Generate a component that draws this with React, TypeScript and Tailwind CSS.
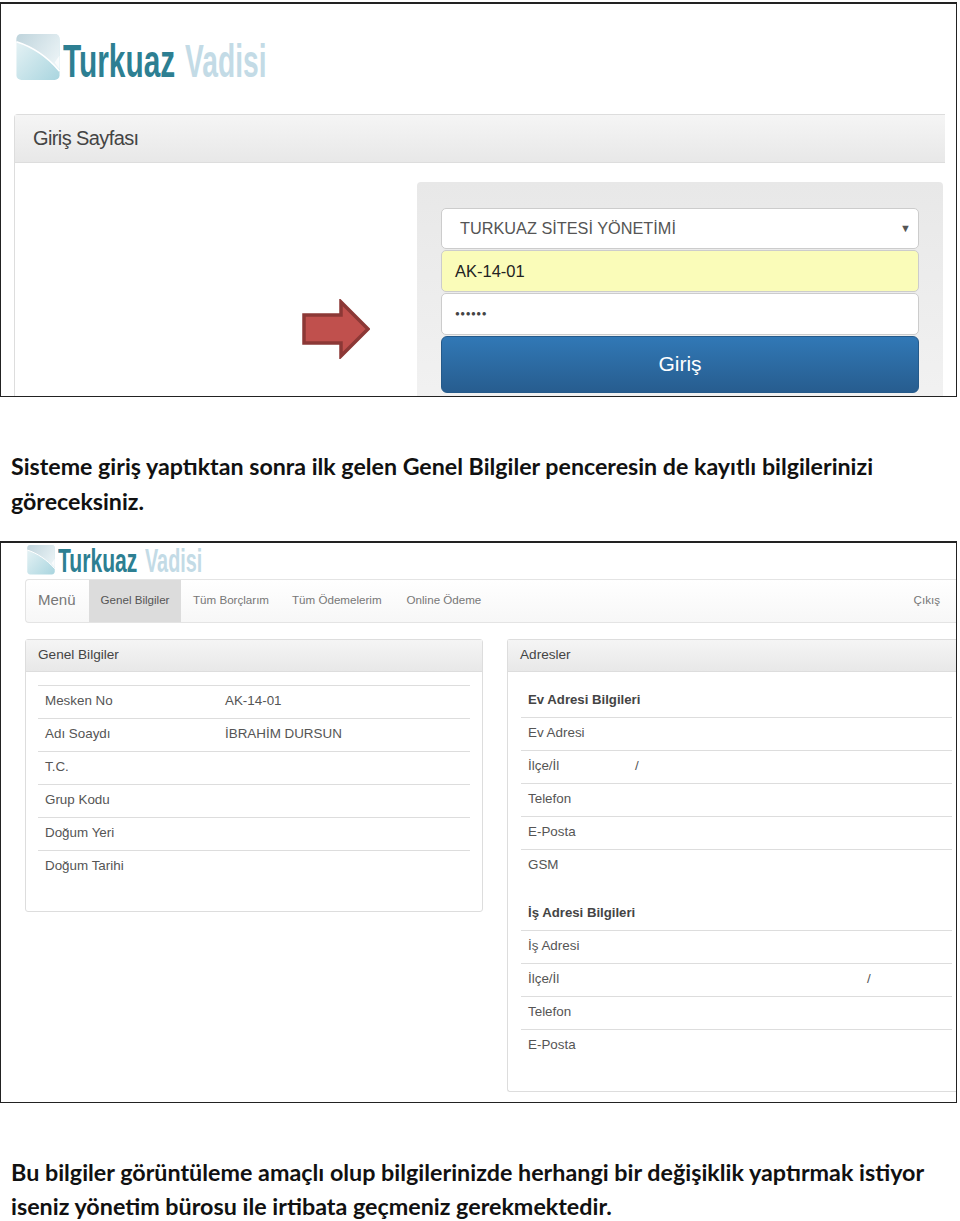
import React from 'react'

const sans = "font-['Liberation_Sans',Arial,sans-serif]"

// Glossy square mark of the Turkuaz Vadisi logo
function LogoMark({ id, className }: { id: string; className: string }) {
  return (
    <svg viewBox="0 0 44 48" className={className}>
      <defs>
        <linearGradient id={`${id}-low`} x1="0" y1="0" x2="1" y2="1">
          <stop offset="0" stopColor="#eaf4f6" />
          <stop offset="1" stopColor="#a9d5df" />
        </linearGradient>
        <linearGradient id={`${id}-top`} x1="0" y1="0" x2="1" y2="0.6">
          <stop offset="0" stopColor="#bfd4dc" />
          <stop offset="1" stopColor="#e9f2f5" />
        </linearGradient>
      </defs>
      <rect x="0" y="0" width="44" height="47" rx="5" fill={`url(#${id}-low)`} />
      <path d="M0 8 V5 C0 2 2 0 5 0 H39 C42 0 44 2 44 5 V38 C32 24 16 13 0 8 Z" fill={`url(#${id}-top)`} />
      <path d="M0 8 C16 13 32 24 44 38" stroke="#ffffff" strokeWidth="1.6" fill="none" />
      <path d="M44 22 L39 29 L44 36 Z" fill="#ffffff" opacity="0.7" />
    </svg>
  )
}

function Row({ label, value }: { label: string; value?: string }) {
  return (
    <div className="flex h-[33px] items-center border-t border-[#ddd] px-[7px] pb-px text-[13.4px] text-[#555]">
      <span className="w-[180px]">{label}</span>
      <span>{value}</span>
    </div>
  )
}

function AddressRow({ label, slashAt }: { label: string; slashAt?: string }) {
  return (
    <div className="flex h-[33px] items-center border-t border-[#ddd] px-[7px] pb-px text-[13.4px] text-[#555]">
      <span className={slashAt}>{label}</span>
      {slashAt && <span>/</span>}
    </div>
  )
}

function PanelHead({ title }: { title: string }) {
  return (
    <div className="flex h-[32px] items-center border-b border-[#ddd] bg-gradient-to-b from-[#f5f5f5] to-[#e8e8e8] px-[12px] text-[13.6px] text-[#444]">
      {title}
    </div>
  )
}

function LoginPage() {
  return (
    <section className={`${sans} mt-[2px] h-[395px] w-[957px] overflow-hidden border border-t-2 border-[#222] bg-white`}>
      <div className="ml-[15px] mt-[30px] flex h-[47px] items-center">
        <LogoMark id="logo-large" className="h-[47px] w-[44px] shrink-0" />
        <span className="ml-[3px] w-[111px] shrink-0 origin-left scale-x-[0.635] whitespace-nowrap pt-[6px] text-[47px] font-bold leading-none text-[#2d7f92]">Turkuaz</span>
        <span className="ml-[11px] w-[82px] shrink-0 origin-left scale-x-[0.6] whitespace-nowrap pt-[6px] text-[47px] font-bold leading-none text-[#c3dbe6]">Vadisi</span>
      </div>
      <div className="ml-[13px] mt-[33px] w-[931px] rounded-tl-[4px] border-l border-t border-[#ddd]">
        <div className="flex h-[48px] items-center border-b border-[#ddd] bg-gradient-to-b from-[#f5f5f5] to-[#e8e8e8] px-[18px] pb-[2px] text-[20px] tracking-[-0.6px] text-[#444]">
          Giriş Sayfası
        </div>
        <div className="flex h-[240px] items-start">
          <svg viewBox="0 0 68 60" className="ml-[287px] mt-[136px] h-[60px] w-[68px] shrink-0">
            <path d="M2 16 H39 V3 L66 30 L39 57 V44 H2 Z" fill="#c0504d" stroke="#8c3836" strokeWidth="3.5" />
          </svg>
          <div className="ml-[47px] mt-[19px] h-[230px] w-[526px] rounded-[4px] bg-gradient-to-b from-[#e8e8e8] to-[#f2f2f2] px-[24px] pt-[26px]">
            <div className="flex h-[41px] items-center justify-between rounded-[5px] border border-[#ccc] bg-white pl-[18px] pr-[7px] text-[16.3px] text-[#555]">
              <span>TURKUAZ SİTESİ YÖNETİMİ</span>
              <span className="text-[11px]">▼</span>
            </div>
            <div className="mt-px flex h-[42px] items-center rounded-[5px] border border-[#ccc] bg-[#fafcb9] px-[13px] text-[16.5px] text-[#222]">
              AK-14-01
            </div>
            <div className="mt-px flex h-[42px] items-center rounded-[5px] border border-[#ccc] bg-white px-[13px] text-[16.5px] text-[#444]">
              <span className="text-[8px] tracking-[0.5px]">●●●●●●</span>
            </div>
            <div className="mt-px flex h-[57px] items-center justify-center rounded-[6px] border border-[#255a8a] bg-gradient-to-b from-[#3178b6] to-[#275d8f] pb-px text-[21px] font-medium text-white">
              Giriş
            </div>
          </div>
        </div>
      </div>
    </section>
  )
}

function InfoPage() {
  return (
    <section className={`${sans} mt-[22px] h-[562px] w-[957px] overflow-hidden border border-t-2 border-[#222] bg-white`}>
      <div className="ml-[25px] mt-px flex h-[32px] items-center">
        <LogoMark id="logo-small" className="h-[30px] w-[30px] shrink-0" />
        <span className="ml-[2px] w-[79px] shrink-0 origin-left scale-x-[0.64] whitespace-nowrap pt-[1px] text-[33px] font-bold leading-none text-[#2d7f92]">Turkuaz</span>
        <span className="ml-[8px] w-[57px] shrink-0 origin-left scale-x-[0.6] whitespace-nowrap pt-[1px] text-[33px] font-bold leading-none text-[#c3dbe6]">Vadisi</span>
      </div>
      <nav className="ml-[24px] mt-[3px] flex h-[44px] w-[931px] items-stretch rounded-l-[4px] border-y border-l border-[#e4e4e4] bg-gradient-to-b from-white to-[#f7f7f7] text-[11.6px] text-[#777]">
        <span className="flex w-[63px] items-center pb-[2px] pl-[12px] text-[15px]">Menü</span>
        <span className="flex w-[92px] items-center justify-center bg-[#dcdcdc] pb-[2px] text-[#555]">Genel Bilgiler</span>
        <span className="ml-[12px] flex items-center pb-[2px]">Tüm Borçlarım</span>
        <span className="ml-[23px] flex items-center pb-[2px]">Tüm Ödemelerim</span>
        <span className="ml-[25px] flex items-center pb-[2px]">Online Ödeme</span>
        <span className="ml-auto mr-[16px] flex items-center pb-[2px]">Çıkış</span>
      </nav>
      <div className="ml-[24px] mt-[16px] flex items-start">
        <div className="h-[273px] w-[458px] rounded-[3px] border border-[#ddd]">
          <PanelHead title="Genel Bilgiler" />
          <div className="px-[12px] pt-[13px]">
            <Row label="Mesken No" value="AK-14-01" />
            <Row label="Adı Soaydı" value="İBRAHİM DURSUN" />
            <Row label="T.C." />
            <Row label="Grup Kodu" />
            <Row label="Doğum Yeri" />
            <Row label="Doğum Tarihi" />
          </div>
        </div>
        <div className="ml-[24px] h-[453px] w-[449px] rounded-l-[3px] border-y border-l border-[#ddd]">
          <PanelHead title="Adresler" />
          <div className="ml-[13px] w-[431px]">
            <div className="flex h-[45px] items-end px-[7px] pb-[7px] text-[13.2px] font-bold text-[#444]">Ev Adresi Bilgileri</div>
            <AddressRow label="Ev Adresi" />
            <AddressRow label="İlçe/İl" slashAt="w-[107px]" />
            <AddressRow label="Telefon" />
            <AddressRow label="E-Posta" />
            <AddressRow label="GSM" />
            <div className="flex h-[48px] items-end px-[7px] pb-[7px] text-[13.2px] font-bold text-[#444]">İş Adresi Bilgileri</div>
            <AddressRow label="İş Adresi" />
            <AddressRow label="İlçe/İl" slashAt="w-[339px]" />
            <AddressRow label="Telefon" />
            <AddressRow label="E-Posta" />
          </div>
        </div>
      </div>
    </section>
  )
}

export default function App() {
  return (
    <div className="h-[1221px] w-[960px] overflow-hidden bg-white">
      <LoginPage />
      <p className="mt-[52px] pl-[11px] font-['Lato',sans-serif] text-[23.2px] font-bold leading-[35px] text-[#111]">
        Sisteme giriş yaptıktan sonra ilk gelen Genel Bilgiler penceresin de kayıtlı bilgilerinizi
        <br />
        göreceksiniz.
      </p>
      <InfoPage />
      <p className="mt-[52px] pl-[11px] font-['Lato',sans-serif] text-[23.3px] font-bold leading-[34px] text-[#111]">
        Bu bilgiler görüntüleme amaçlı olup bilgilerinizde herhangi bir değişiklik yaptırmak istiyor
        <br />
        iseniz yönetim bürosu ile irtibata geçmeniz gerekmektedir.
      </p>
    </div>
  )
}
